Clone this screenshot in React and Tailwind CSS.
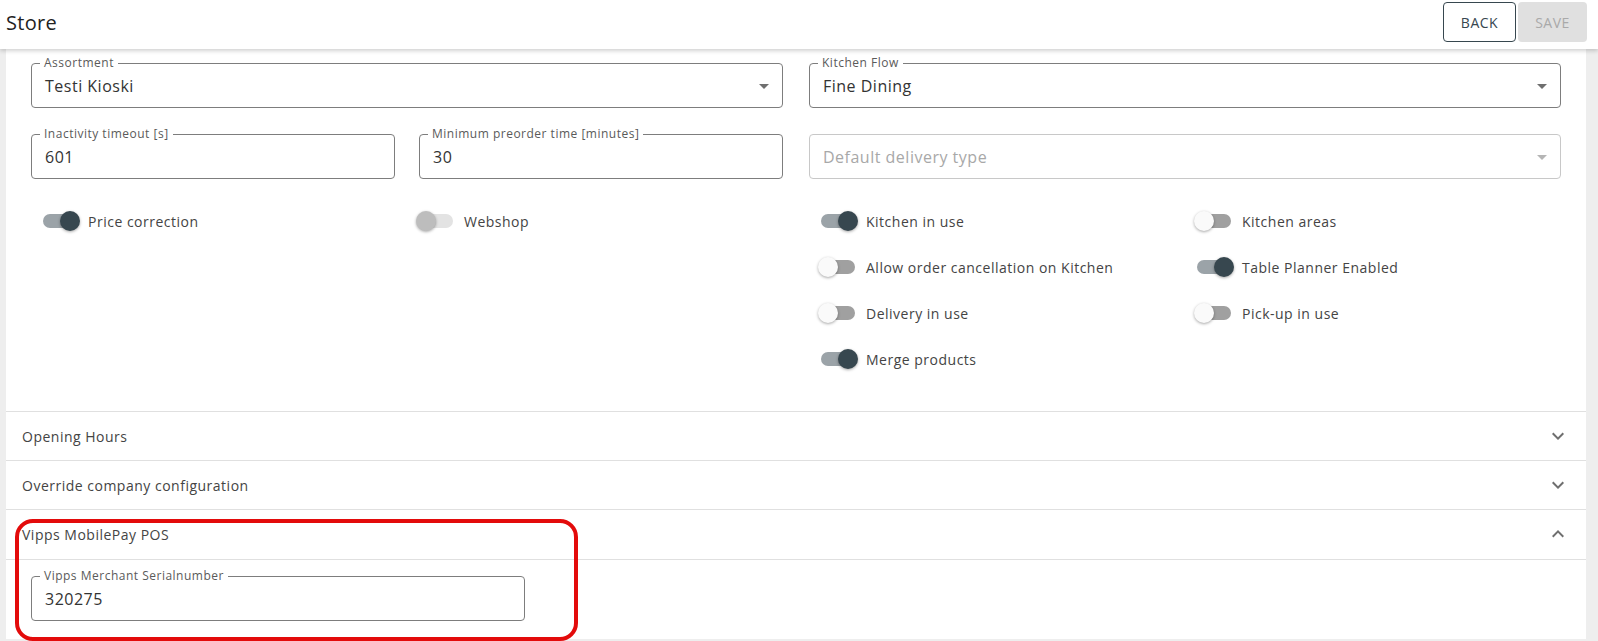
import React from 'react';

const font = { fontFamily: '"Open Sans", "Liberation Sans", sans-serif' };

const ArrowDrop = ({ light }) => (
  <svg viewBox="0 0 24 24" className={`h-6 w-6 ${light ? 'fill-[#b5b5b5]' : 'fill-[#6f6f6f]'}`}>
    <path d="M7 10l5 5 5-5z" />
  </svg>
);

const Expand = ({ up }) => (
  <svg viewBox="0 0 24 24" className="h-6 w-6 fill-[#6f6f6f]">
    {up ? (
      <path d="m12 8-6 6 1.41 1.41L12 10.83l4.59 4.58L18 14z" />
    ) : (
      <path d="M16.59 8.59 12 13.17 7.41 8.59 6 10l6 6 6-6z" />
    )}
  </svg>
);

const Field = ({ label, value, select, placeholder }) => (
  <div
    className={`relative h-[45px] rounded border ${
      placeholder ? 'border-[#c8c8c8]' : 'border-[#7d7d7d]'
    }`}
  >
    {label && (
      <span className="absolute -top-[8px] left-[8px] bg-white px-[4px] text-[12px] leading-[14px] text-[#5a5a5a]">
        {label}
      </span>
    )}
    <div className="flex h-full items-center justify-between pl-[13px] pr-[6px]">
      <span className={`text-[16px] ${placeholder ? 'text-[#a8a8a8]' : 'text-[#333333]'}`}>
        {value || placeholder}
      </span>
      {select && <ArrowDrop light={placeholder} />}
    </div>
  </div>
);

const Toggle = ({ on, disabled, label, offset = 'ml-[12px]' }) => (
  <div className="flex h-[46px] items-center">
    <div className={`relative h-[14px] w-[34px] shrink-0 rounded-full ${offset} ${
      disabled ? 'bg-[#e3e3e3]' : on ? 'bg-[#9ba3a8]' : 'bg-[#a0a0a0]'
    }`}>
      <span
        className={`absolute -top-[3px] h-[20px] w-[20px] rounded-full shadow-[0_1px_3px_rgba(0,0,0,0.35)] ${
          disabled
            ? '-left-[3px] bg-[#bdbdbd]'
            : on
            ? 'left-[17px] bg-[#37474f]'
            : '-left-[3px] bg-[#fafafa]'
        }`}
      />
    </div>
    <span className="ml-[11px] text-[14px] text-[#444444]">{label}</span>
  </div>
);

const AccordionRow = ({ title, up, children }) => (
  <div className="border-t border-[#e0e0e0] bg-white">
    <div className="flex h-[48px] items-center justify-between pl-[16px] pr-[16px]">
      <span className="text-[14px] text-[#444444]">{title}</span>
      <Expand up={up} />
    </div>
    {children}
  </div>
);

export default function App() {
  return (
    <div className="relative h-[641px] overflow-hidden bg-[#eeeeee] tracking-[0.5px]" style={font}>
      {/* header */}
      <header className="relative z-10 flex h-[49px] items-center justify-between bg-white pl-[6px] pr-[11px] shadow-[0_2px_4px_rgba(0,0,0,0.18)]">
        <h1 className="-mt-[3px] text-[20px] tracking-[0.3px] text-[#222222]">Store</h1>
        <div className="flex gap-[2px] self-start pt-[2px]">
          <button className="h-[40px] w-[73px] rounded border border-[#37474f] text-[14px] text-[#37474f]">
            BACK
          </button>
          <button className="h-[40px] w-[69px] rounded bg-[#e0e0e0] text-[14px] text-[#a9a9a9]">
            SAVE
          </button>
        </div>
      </header>

      <div className="mx-[6px] mr-[12px] bg-white">
        {/* main settings */}
        <div className="grid grid-cols-2 gap-x-[26px] px-[25px] pb-[29px] pt-[14px]">
          <div className="flex flex-col">
            <Field label="Assortment" value="Testi Kioski" select />
            <div className="mt-[26px] grid grid-cols-2 gap-x-[24px]">
              <Field label="Inactivity timeout [s]" value="601" />
              <Field label="Minimum preorder time [minutes]" value="30" />
            </div>
            <div className="mt-[19px] grid grid-cols-2 gap-x-[24px]">
              <Toggle on label="Price correction" />
              <Toggle disabled label="Webshop" offset="ml-[0px]" />
            </div>
          </div>
          <div className="flex flex-col">
            <Field label="Kitchen Flow" value="Fine Dining" select />
            <div className="mt-[26px]">
              <Field placeholder="Default delivery type" select />
            </div>
            <div className="mt-[19px] grid grid-cols-2">
              <Toggle on label="Kitchen in use" />
              <Toggle label="Kitchen areas" />
              <Toggle label="Allow order cancellation on Kitchen" />
              <Toggle on label="Table Planner Enabled" />
              <Toggle label="Delivery in use" />
              <Toggle label="Pick-up in use" />
              <Toggle on label="Merge products" />
            </div>
          </div>
        </div>

        <AccordionRow title="Opening Hours" />
        <AccordionRow title="Override company configuration" />
        <AccordionRow title="Vipps MobilePay POS" up>
          <div className="mt-[1px] border-t border-[#e0e0e0] px-[25px] pb-[18px] pt-[16px]">
            <div className="w-[494px]">
              <Field label="Vipps Merchant Serialnumber" value="320275" />
            </div>
          </div>
        </AccordionRow>
      </div>

      {/* annotation */}
      <div className="pointer-events-none absolute left-[15px] top-[519px] h-[122px] w-[563px] rounded-[18px] border-[4px] border-[#e30b0b]" />
    </div>
  );
}
